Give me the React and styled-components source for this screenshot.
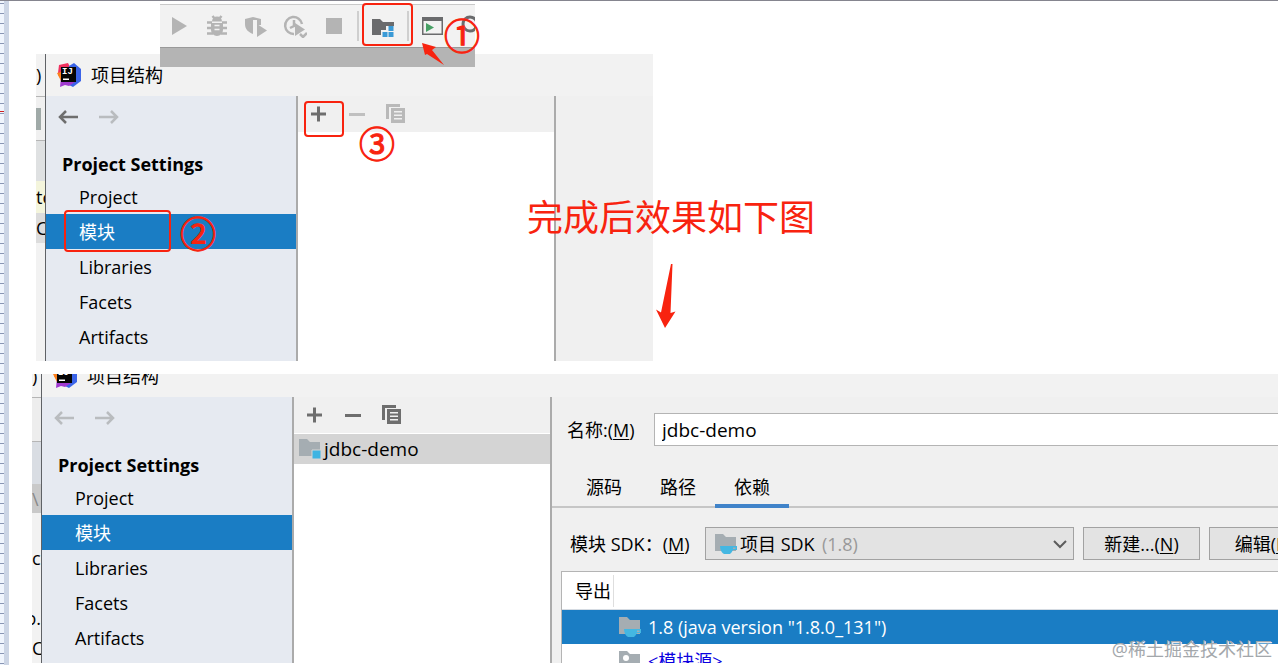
import styled, { createGlobalStyle } from 'styled-components';
import { useState } from 'react';

const red = '#f8230f';
const blue = '#1a7dc4';
const sideColor = '#e6eaf1';
const panelColor = '#f0f0f0';
const lineColor = '#ababab';

const navItems = ['Project', '模块', 'Libraries', 'Facets', 'Artifacts'];
const tabs = ['源码', '路径', '依赖'];

// what is still visible of the editor behind each dialog
const firstBackdrop = [
    { text: ')', height: 43, color: '#f2f2f2', line: true },
    { text: '', height: 44, color: '#f0f0f0', line: true, scrap: true },
    { text: '', height: 40, color: '#dfe1e2' },
    { text: 'tc', height: 32, color: '#f4f5dc' },
    { text: 'C', height: 30, color: '#dcdcdc' },
];

const secondBackdrop = [
    { text: ')', height: 43, color: '#f2f2f2', line: true },
    { text: '', height: 44, color: '#ededed', line: true },
    { text: '', height: 42, color: '#d9dde3' },
    { text: '\\', height: 29, color: '#c9c9c9', muted: true },
    { text: '', height: 30, color: '#f2f2f2' },
    { text: 'cc', height: 30, color: '#f2f2f2' },
    { text: '', height: 30, color: '#f2f2f2' },
    { text: 'o.', height: 30, color: '#f2f2f2', end: true },
    { text: 'C', height: 30, color: '#f2f2f2' },
];

const App = () => (
    <>
        <GlobalStyle />
        <Page>
            <Ruler />
            <Sheet>
                <Figure>
                    <Backdrop parts={firstBackdrop} />
                    <StructureDialog canGoBack />
                </Figure>
                <Figure $wide>
                    <Backdrop cropped parts={secondBackdrop} />
                    <StructureDialog cropped module="jdbc-demo">
                        <ModuleEditor />
                    </StructureDialog>
                </Figure>
            </Sheet>
            <RunToolbar />
            <Notes />
            <Watermark>@稀土掘金技术社区</Watermark>
        </Page>
    </>
);

const Backdrop = ({ parts, cropped }) => (
    <Strip $cropped={cropped}>
        {parts.map((p, i) => (
            <StripPart key={i} $height={p.height} $color={p.color} $line={p.line} $muted={p.muted} $end={p.end}>
                {p.scrap ? <Scrap /> : p.text}
            </StripPart>
        ))}
    </Strip>
);

const StructureDialog = ({ cropped, canGoBack, module, children }) => {
    const [selected, setSelected] = useState('模块');
    return (
        <Dialog>
            <TitleBar $cropped={cropped}>
                <IdeaLogo />
                项目结构
            </TitleBar>
            <Body>
                <Side>
                    <History>
                        <IconButton aria-label="Back"><Arrow active={canGoBack} /></IconButton>
                        <IconButton aria-label="Forward"><Arrow flip /></IconButton>
                    </History>
                    <SideTitle>Project Settings</SideTitle>
                    <nav>
                        {navItems.map(item => (
                            <NavItem
                                key={item}
                                $active={item === selected}
                                onClick={() => setSelected(item)}
                            >
                                {item}
                            </NavItem>
                        ))}
                    </nav>
                </Side>
                <Modules>
                    <ModuleTools>
                        <IconButton aria-label="Add"><Plus /></IconButton>
                        <IconButton aria-label="Remove"><Minus active={!!module} /></IconButton>
                        <IconButton aria-label="Copy"><Copy active={!!module} /></IconButton>
                    </ModuleTools>
                    {module &&
                        <ModuleRow>
                            <Folder badge="module" />
                            {module}
                        </ModuleRow>
                    }
                </Modules>
                {children || <EmptyPane />}
            </Body>
        </Dialog>
    );
};

const ModuleEditor = () => {
    const [name, setName] = useState('jdbc-demo');
    const [tab, setTab] = useState('依赖');
    return (
        <Editor>
            <NameRow>
                <NameLabel htmlFor="name">名称:(<u>M</u>)</NameLabel>
                <NameInput id="name" value={name} onChange={e => setName(e.target.value)} />
            </NameRow>
            <Tabs>
                {tabs.map(t => (
                    <Tab key={t} $active={t === tab} onClick={() => setTab(t)}>{t}</Tab>
                ))}
            </Tabs>
            <SdkRow>
                <SdkLabel htmlFor="sdk">模块 SDK：(<u>M</u>)</SdkLabel>
                <SelectBox>
                    <Folder badge="cup" />
                    <Select id="sdk">
                        <option>项目 SDK</option>
                    </Select>
                    <Version>(1.8)</Version>
                    <Chevron />
                </SelectBox>
                <Button>新建...(<u>N</u>)</Button>
                <Button $last>编辑(<u>E</u>)</Button>
            </SdkRow>
            <Table>
                <thead>
                    <tr>
                        <ExportHead>导出</ExportHead>
                        <th aria-label="Name" />
                    </tr>
                </thead>
                <tbody>
                    <Row $active>
                        <td />
                        <td><Cell><Folder badge="cup" />1.8 (java version "1.8.0_131")</Cell></td>
                    </Row>
                    <Row>
                        <td />
                        <td><Cell $source><Folder badge="source" />&lt;模块源&gt;</Cell></td>
                    </Row>
                </tbody>
            </Table>
        </Editor>
    );
};

const RunToolbar = () => (
    <RunBar>
        <RunTools>
            <RunGroup>
                <IconButton aria-label="Run">
                    <svg width="24" height="24"><path d="M6 3v18l15-9z" fill="#b4b4b4" /></svg>
                </IconButton>
                <IconButton aria-label="Debug">
                    <svg width="24" height="24" fill="none" stroke="#b4b4b4" strokeWidth="2.5">
                        <path d="M7 7.500a5 5 0 0 1 10 0z M6 9h12v7a6 6 0 0 1-12 0z" fill="#b4b4b4" stroke="none" />
                        <path d="M7.500 2l2.500 3M16.500 2L14 5M2 8.500h5M22 8.500h-5M2 14h5M17 14h5M2 19.500h6M22 19.500h-6" />
                        <path d="M9.500 11.500h5M9.500 15.500h5" stroke="#f2f2f2" strokeWidth="1.5" />
                    </svg>
                </IconButton>
                <IconButton aria-label="Run with coverage">
                    <svg width="24" height="24" fill="#b4b4b4">
                        <path d="M1 5l8-2 8 2v6h-4V6H9v14c-5-2-8-5-8-10z" />
                        <path d="M13 10v13l10-6.500z" />
                    </svg>
                </IconButton>
                <IconButton aria-label="Profile">
                    <svg width="24" height="24" fill="none" stroke="#b4b4b4" strokeWidth="2.5">
                        <path d="M11 20a8.500 8.500 0 1 1 8-10M11 6v6l-4 2" />
                        <path d="M12 9v13l10-6.500z" fill="#b4b4b4" stroke="none" />
                        <path d="M17 20l3 3 4-4" />
                    </svg>
                </IconButton>
                <IconButton aria-label="Stop">
                    <svg width="24" height="24"><path d="M4 4h16v16H4z" fill="#b4b4b4" /></svg>
                </IconButton>
            </RunGroup>
            <Separator />
            <IconButton aria-label="Project structure">
                <svg width="26" height="24">
                    <path d="M2 5h8l3 3h11v4h-8v4h-5v5H2z" fill="#6a6b6d" />
                    <path d="M18.500 12h5v5h-5zM12.500 18h5v5h-5zM18.500 18h5v5h-5z" fill="#3a9ad6" />
                </svg>
            </IconButton>
            <Separator />
            <RunGroup>
                <IconButton aria-label="Run anything">
                    <svg width="24" height="24">
                        <path d="M2 3h21v18H2zM3.500 7v12.500h18V7z" fill="#6a6b6d" fillRule="evenodd" />
                        <path d="M6 9v9l8-4.500z" fill="#47a065" />
                    </svg>
                </IconButton>
                <IconButton aria-label="Search">
                    <svg width="24" height="24" fill="none" stroke="#6a6b6d" strokeWidth="3">
                        <circle cx="11" cy="10" r="7" />
                    </svg>
                </IconButton>
            </RunGroup>
        </RunTools>
    </RunBar>
);

const Notes = () => (
    <>
        <Frame $left={362} $top={2} $width={51} $height={43} />
        <Frame $left={64} $top={209} $width={107} $height={42} />
        <Frame $left={304} $top={100} $width={40} $height={36} />
        <Step $left={444} $top={15}>①</Step>
        <Step $left={180} $top={213}>②</Step>
        <Step $left={359} $top={123}>③</Step>
        <Caption>完成后效果如下图</Caption>
        <Pointer $left={420} $top={40} width="26" height="26">
            <path d="M2 2l14 4-4 3 12 15-17-11-2 1z" fill={red} />
        </Pointer>
        <Pointer $left={655} $top={262} width="22" height="66">
            <path d="M16 1h1.500L15.500 50l5-1.500L10 65 1 46.500l5 3z" fill={red} />
        </Pointer>
    </>
);

const IdeaLogo = () => (
    <svg width="24" height="24" viewBox="0 0 24 24">
        <path d="M1 12l2-3 5 3-2 7z" fill="#fc801d" />
        <path d="M2 2l9-2 3 6-7 8-6-4z" fill="#f0315f" />
        <path d="M12 3l5-3 7 6v12l-8 6-6-3z" fill="#3b64e8" />
        <path d="M4 14l14 5-6 4-4-1-5 2z" fill="#a13ad0" />
        <path d="M0 10l4-1v9z" fill="#fc801d" />
        <path d="M4 4h15v15H4z" fill="#050505" />
        <text x="5" y="11" fill="#fff" fontFamily="Liberation Mono" fontSize="9" fontWeight="700">IJ</text>
        <path d="M6 15.500h6v1.500H6z" fill="#fff" />
    </svg>
);

const Arrow = ({ active, flip }) => (
    <svg width="22" height="20" fill="none" stroke={active ? '#6e6e6e' : '#b9bcbf'} strokeWidth="2.5">
        <path d={flip ? 'M0 10h18M12 4l6 6-6 6' : 'M21 10H3M9 4l-6 6 6 6'} />
    </svg>
);

const Plus = () => (
    <svg width="20" height="20"><path d="M3 10h15M10.500 2.500v15" stroke="#6e6e6e" strokeWidth="3" /></svg>
);

const Minus = ({ active }) => (
    <svg width="20" height="20">
        <path d="M2 10.500h16" stroke={active ? '#6e6e6e' : '#c0c0c0'} strokeWidth="3" />
    </svg>
);

const Copy = ({ active }) => (
    <svg width="20" height="20" fill={active ? '#6e6e6e' : '#b9b9b9'}>
        <path d="M0 0h14v3H3v12H0z" />
        <path d="M5 4h14v15H5zM8 7v1.500h8V7zM8 10.500V12h8v-1.500zM8 14v1.500h8V14z" fillRule="evenodd" />
    </svg>
);

const Folder = ({ badge }) => (
    <svg width="24" height="22">
        <path d="M1 1h8l3 3h10v14H1z" fill="#a5adb2" />
        {badge === 'module' && <path d="M14 12h9v9h-9z" fill="#3eb4e2" stroke="#d4d4d4" />}
        {badge === 'cup' &&
            <path d="M6 13h17v4h-4c-1 2-2 3-3 4h-6c-2-1-4-4-4-8zM19 14.500v1.500h2.500v-1.500z" fill="#44b7e2" fillRule="evenodd" />
        }
        {badge === 'source' && <circle cx="8" cy="8" r="3" fill="#fff" />}
    </svg>
);

const Chevron = () => (
    <svg width="14" height="10" fill="none" stroke="#5c5c5c" strokeWidth="2">
        <path d="M1 2l6 6 6-6" />
    </svg>
);

const GlobalStyle = createGlobalStyle`
    *{
        box-sizing: border-box;
    }
    body{
        margin: 0;
        background-color: white;
        color: black;
        font: 18px/24px "Open Sans", "Noto Sans CJK SC", sans-serif;
    }
    button, input, select{
        font: inherit;
        color: inherit;
    }
    svg{
        display: block;
        flex: none;
    }
    u{
        text-underline-offset: 2px;
    }
`;

const Page = styled.div`
    position: relative;
    display: flex;
    height: 100vh;
    overflow: hidden;
    border-top: 1px solid #85858f;
`;

const Ruler = styled.div`
    width: 9px;
    border-right: 5px solid #ccd5e5;
    background:
        linear-gradient(#d02020, #d02020) 0 110px / 4px 1px no-repeat,
        repeating-linear-gradient(#f0f5fd 0 2px, #8996b4 2px 3px, #f0f5fd 3px 10px);
`;

const Sheet = styled.main`
    flex: 1;
    min-width: 0;
    display: flex;
    flex-direction: column;
    align-items: flex-start;
    gap: 13px;
    padding: 53px 0 2px 23px;
`;

const Figure = styled.section`
    display: flex;
    ${({ $wide }) => $wide
        ? 'flex: 1; align-self: stretch; min-height: 0; overflow: hidden;'
        : 'margin-left: 4px;'
    }
`;

const Strip = styled.div`
    width: 9px;
    flex: none;
    overflow: hidden;
    margin-top: ${({ $cropped }) => $cropped ? '-19px' : '0'};
    background-color: #f2f2f2;
`;

const StripPart = styled.div`
    height: ${({ $height }) => $height}px;
    display: flex;
    align-items: center;
    justify-content: ${({ $end }) => $end ? 'flex-end' : 'flex-start'};
    background-color: ${({ $color }) => $color};
    color: ${({ $muted }) => $muted ? '#8a8a8a' : 'black'};
    border-bottom: ${({ $line }) => $line ? '1px solid #b5b5b5' : 'none'};
`;

const Scrap = styled.div`
    width: 5px;
    height: 22px;
    background-color: #a0aaa8;
`;

const Dialog = styled.div`
    flex: 1;
    min-width: 0;
    display: flex;
    flex-direction: column;
    border-left: 1px solid #5f6266;
    background-color: ${panelColor};
`;

const TitleBar = styled.header`
    height: 42px;
    flex: none;
    display: flex;
    align-items: center;
    gap: 10px;
    padding-left: 11px;
    margin-top: ${({ $cropped }) => $cropped ? '-19px' : '0'};
    background-color: #f2f2f2;
`;

const Body = styled.div`
    flex: 1;
    min-height: 0;
    display: flex;
`;

const Side = styled.aside`
    width: 252px;
    flex: none;
    padding-bottom: 7px;
    border-right: 2px solid ${lineColor};
    background-color: ${sideColor};
`;

const History = styled.div`
    height: 42px;
    display: flex;
    align-items: center;
    gap: 20px;
    padding-left: 11px;
`;

const IconButton = styled.button`
    display: flex;
    padding: 0;
    border: none;
    background: none;
`;

const SideTitle = styled.h2`
    margin: 11px 0 0;
    padding-left: 16px;
    font-size: 18px;
    line-height: 30px;
`;

const NavItem = styled.button`
    display: block;
    width: 100%;
    height: 35px;
    padding: 0 0 0 33px;
    border: none;
    text-align: left;
    background-color: ${({ $active }) => $active ? blue : 'transparent'};
    color: ${({ $active }) => $active ? 'white' : 'black'};
`;

const Modules = styled.div`
    width: 258px;
    flex: none;
    border-right: 2px solid ${lineColor};
    background-color: white;
`;

const ModuleTools = styled.div`
    height: 36px;
    display: flex;
    align-items: center;
    gap: 19px;
    padding-left: 10px;
    background-color: ${panelColor};
`;

const ModuleRow = styled.div`
    height: 30px;
    display: flex;
    align-items: center;
    gap: 2px;
    margin-top: 1px;
    padding-left: 4px;
    font-size: 19px;
    background-color: #d4d4d4;
`;

const EmptyPane = styled.div`
    width: 97px;
`;

const Editor = styled.div`
    flex: 1;
    min-width: 0;
    padding-top: 16px;
`;

const NameRow = styled.div`
    display: flex;
    align-items: center;
    padding-left: 15px;
`;

const NameLabel = styled.label`
    width: 87px;
`;

const NameInput = styled.input`
    flex: 1;
    min-width: 0;
    height: 33px;
    padding: 0 7px;
    border: 1px solid #b4b4b4;
    border-right: none;
    font-size: 19px;
    background-color: white;
`;

const Tabs = styled.div`
    display: flex;
    margin-top: 20px;
    padding-left: 15px;
    box-shadow: inset 0 -2px #c6c6c6;
`;

const Tab = styled.button`
    height: 42px;
    padding: 4px 19px 0;
    border: none;
    border-bottom: 4px solid ${({ $active }) => $active ? '#4083c9' : 'transparent'};
    background: none;
`;

const SdkRow = styled.div`
    display: flex;
    align-items: center;
    gap: 9px;
    margin-top: 19px;
    padding-left: 18px;
`;

const SdkLabel = styled.label`
    width: 126px;
    white-space: nowrap;
`;

const SelectBox = styled.div`
    position: relative;
    flex: 1;
    min-width: 0;
    height: 33px;
    display: flex;
    align-items: center;
    padding: 0 6px 0 8px;
    border: 1px solid #a2a2a2;
    background-color: #e3e3e3;
`;

const Select = styled.select`
    flex: 1;
    min-width: 0;
    padding: 0 2px;
    border: none;
    appearance: none;
    background: none;
`;

const Version = styled.span`
    position: absolute;
    left: 116px;
    color: #999;
    pointer-events: none;
`;

const Button = styled.button`
    width: ${({ $last }) => $last ? '108px' : '117px'};
    height: 33px;
    flex: none;
    padding: 0;
    border: 1px solid #a2a2a2;
    background-color: #e3e3e3;
    margin-right: ${({ $last }) => $last ? '-39px' : '0'};
`;

const Table = styled.table`
    width: calc(100% - 9px);
    margin: 11px 0 0 9px;
    border-collapse: separate;
    border-spacing: 0;
    border-top: 1px solid #b4b4b4;
    border-left: 1px solid #b4b4b4;
    background-color: white;
    th, td{
        padding: 0;
        font-weight: 400;
        text-align: left;
    }
    th{
        height: 38px;
        border-bottom: 1px solid #d5dbe2;
    }
`;

const ExportHead = styled.th`
    width: 52px;
    background: linear-gradient(#dedede, #dedede) right center / 1px 32px no-repeat;
    &&{
        padding-left: 13px;
    }
`;

const Row = styled.tr`
    height: 34px;
    background-color: ${({ $active }) => $active ? blue : 'white'};
    color: ${({ $active }) => $active ? 'white' : 'black'};
`;

const Cell = styled.div`
    display: flex;
    align-items: center;
    gap: 6px;
    padding-left: 4px;
    color: ${({ $source }) => $source ? '#0a00e0' : 'inherit'};
`;

const RunBar = styled.div`
    position: absolute;
    left: 160px;
    top: 3px;
    width: 315px;
    overflow: hidden;
    border-top: 1px solid #c9c9c9;
    border-bottom: 19px solid #b4b4b4;
    background-color: #f2f2f2;
`;

const RunTools = styled.div`
    height: 43px;
    display: flex;
    align-items: center;
    gap: 11px;
    padding-left: 6px;
    border-bottom: 1px solid #999;
`;

const RunGroup = styled.div`
    display: flex;
    flex: none;
    gap: 15px;
`;

const Separator = styled.div`
    width: 2px;
    height: 30px;
    flex: none;
    background-color: #cfcfcf;
`;

const Frame = styled.div`
    position: absolute;
    left: ${({ $left }) => $left}px;
    top: ${({ $top }) => $top}px;
    width: ${({ $width }) => $width}px;
    height: ${({ $height }) => $height}px;
    border: 2px solid ${red};
    border-radius: 4px;
    pointer-events: none;
`;

const Step = styled.span`
    position: absolute;
    left: ${({ $left }) => $left}px;
    top: ${({ $top }) => $top}px;
    color: ${red};
    font: 36px/36px "Noto Sans CJK SC", sans-serif;
    -webkit-text-stroke: 1px ${red};
`;

const Caption = styled.p`
    position: absolute;
    left: 527px;
    top: 195px;
    margin: 0;
    color: ${red};
    font-size: 36px;
    line-height: 44px;
    white-space: nowrap;
`;

const Pointer = styled.svg`
    position: absolute;
    left: ${({ $left }) => $left}px;
    top: ${({ $top }) => $top}px;
`;

const Watermark = styled.div`
    position: absolute;
    right: 6px;
    bottom: 4px;
    color: #a3a7ab;
    text-shadow: 1px 1px white;
`;

export default App;
